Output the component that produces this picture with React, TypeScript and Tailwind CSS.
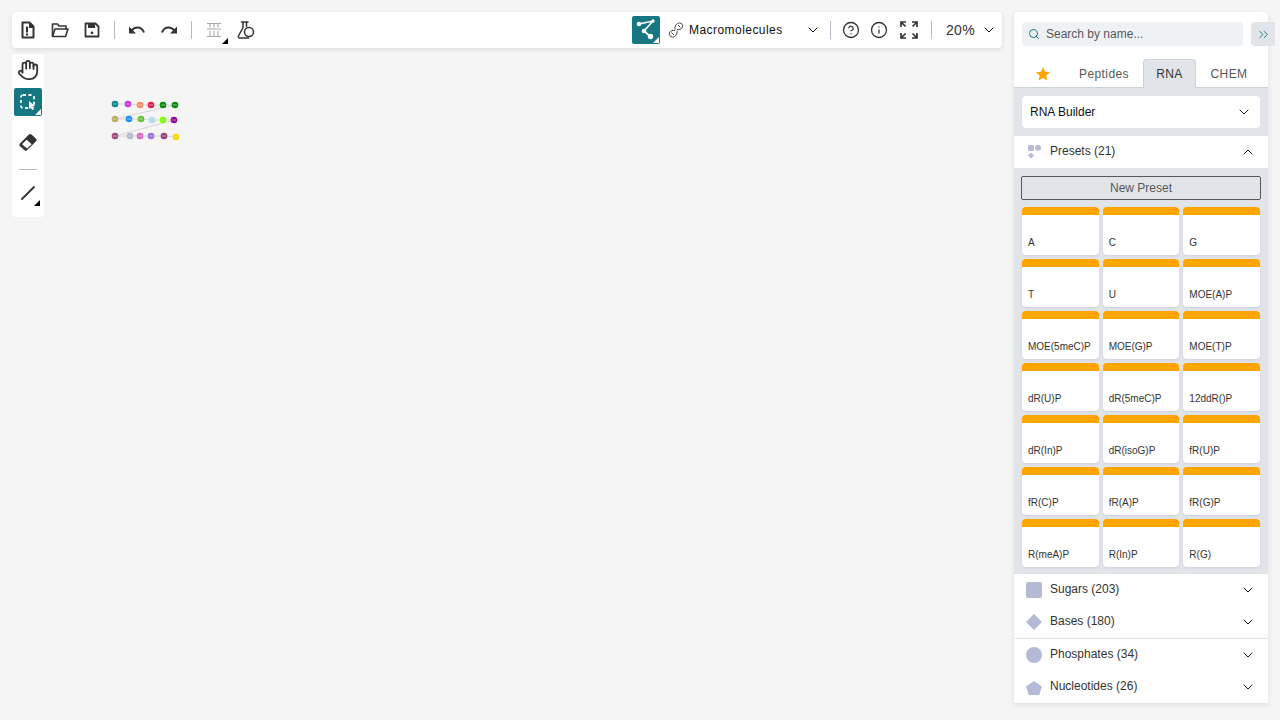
import React from "react";
import { ChevronDown, ChevronUp, Search, ChevronsRight, CircleHelp, Info } from "lucide-react";

const Tri = ({ color = "#000" }: { color?: string }) => (
  <svg width="6" height="6" viewBox="0 0 6 6" className="absolute right-0 bottom-0"><path d="M6 0V6H0Z" fill={color} /></svg>
);
const Sep = () => <div className="w-px h-[18px] bg-[#b4b9c4] mx-[6px]" />;
const Btn = ({ children }: { children: React.ReactNode }) => (
  <div className="relative w-[28px] h-[28px] flex items-center justify-center mx-[2px]">{children}</div>
);

const presets = ["A","C","G","T","U","MOE(A)P","MOE(5meC)P","MOE(G)P","MOE(T)P","dR(U)P","dR(5meC)P","12ddR()P","dR(In)P","dR(isoG)P","fR(U)P","fR(C)P","fR(A)P","fR(G)P","R(meA)P","R(In)P","R(G)"];

const rows: [number, number, string][][] = [
  [[115,104,"#0a8a8a"],[128,104,"#cc33ee"],[140,105,"#ff8c66"],[151,105,"#e0204a"],[163,105,"#0a8a0a"],[175,105,"#0a8a0a"]],
  [[115,119,"#b5b060"],[129,119,"#1e8fff"],[141,119,"#66c23c"],[152,120,"#b0e0e6"],[163,120,"#7cfc00"],[174,120,"#990099"]],
  [[115,136,"#994d88"],[130,136,"#b0bcc8"],[140,136,"#dd66c4"],[151,136,"#a070d8"],[164,136,"#993d80"],[176,137,"#ffd700"]],
];

const Row = ({ icon, label }: { icon: React.ReactNode; label: string }) => (
  <div className="h-[32px] flex items-center px-[12px] bg-white">
    <div className="w-[16px] h-[16px] flex items-center justify-center mr-[8px]">{icon}</div>
    <span className="text-[12px] text-[#333] relative top-[-1px] flex-1">{label}</span>
    <ChevronDown size={16} color="#111" strokeWidth={1.5} />
  </div>
);

export default function App() {
  return (
    <div className="relative h-[720px] w-[1280px] bg-[#f5f5f5] overflow-hidden flex gap-3 p-3 font-['Liberation_Sans',Arial,sans-serif]">
      <div className="flex-1 flex flex-col gap-[6px] items-start">
        <div className="w-full h-[36px] bg-white rounded-[4px] shadow-[0_2px_5px_rgba(103,104,132,0.15)] flex items-center pr-[4px]">
          <Btn>
            <svg width="16" height="18" viewBox="0 0 16 18" fill="none">
              <path d="M2.500 1.500h7l4 4v11h-11z" stroke="#333" strokeWidth="2" strokeLinejoin="round" />
              <path d="M9 1.500h1l4 4v1.500H9z" fill="#333" />
              <path d="M7 5.500v6M7 12.500v2" stroke="#333" strokeWidth="2" />
            </svg>
          </Btn>
          <Btn>
            <svg width="18" height="16" viewBox="0 0 18 16" fill="none">
              <path d="M1.500 14V2h5l1.500 2h7v3" stroke="#333" strokeWidth="1.600" strokeLinejoin="round" />
              <path d="M1.500 14.500l2.500-7.500h13l-2.500 7.500z" stroke="#333" strokeWidth="1.600" strokeLinejoin="round" />
            </svg>
          </Btn>
          <Btn>
            <svg width="16" height="16" viewBox="0 0 16 16" fill="none">
              <path d="M1.500 1.500h10l3 3v10h-13z" stroke="#333" strokeWidth="1.800" strokeLinejoin="round" />
              <path d="M4 2h7v4H4z" fill="#333" />
              <circle cx="8" cy="10.800" r="1.400" fill="#333" />
            </svg>
          </Btn>
          <Sep />
          <Btn>
            <svg width="18" height="10" viewBox="0 0 18 10" fill="none">
              <path d="M3 6c2-2.400 4-3.500 6.500-3.500 3 0 5.300 1.800 6.500 5" stroke="#333" strokeWidth="2" />
              <path d="M1 1.500V8.500H8z" fill="#333" />
            </svg>
          </Btn>
          <Btn>
            <svg width="18" height="10" viewBox="0 0 18 10" fill="none">
              <path d="M15 6c-2-2.400-4-3.500-6.500-3.500-3 0-5.300 1.800-6.500 5" stroke="#333" strokeWidth="2" />
              <path d="M17 1.500V8.500H10z" fill="#333" />
            </svg>
          </Btn>
          <Sep />
          <Btn>
            <svg width="16" height="16" viewBox="0 0 16 16" fill="none">
              <path d="M1 1.500h14M1 14.500h14M1 7h14M4 2v3.500M8 2v3.500M12 2v3.500M4 9v5M8 9v5M12 9v5" stroke="#a8a8a8" strokeWidth="1.100" />
            </svg>
            <span className="absolute right-[0px] bottom-[0px] w-[6px] h-[6px]"><Tri /></span>
          </Btn>
          <Btn>
            <svg width="18" height="18" viewBox="0 0 18 18" fill="none" stroke="#333" strokeWidth="1.500" strokeLinejoin="round" strokeLinecap="round">
              <path d="M4.500 1h6.500M6 1.500v5L1.500 15c-.4 1 .2 2 1.200 2h9" />
              <path d="M9.500 1.500v4" />
              <circle cx="12" cy="11" r="4.500" />
            </svg>
          </Btn>
          <div className="flex-1" />
          <div className="relative w-[28px] h-[28px] bg-[#167782] rounded-[2px] mr-[8px]">
            <svg width="28" height="28" viewBox="0 0 28 28" fill="none">
              <path d="M7 8L21 5L12 15L19 21" stroke="#fff" strokeWidth="1.700" strokeLinejoin="round" />
              <circle cx="7" cy="8" r="2.300" fill="#fff" /><circle cx="21" cy="5" r="1.700" fill="#fff" /><circle cx="12" cy="15" r="2.300" fill="#fff" /><circle cx="18.500" cy="20.500" r="2.700" fill="#fff" />
            </svg>
            <span className="absolute right-[1px] bottom-[1px] w-[6px] h-[6px]"><Tri color="#fff" /></span>
          </div>
          <div className="w-[162px] flex items-center">
            <svg width="16" height="16" viewBox="0 0 16 16" fill="none" className="mr-[5px]">
              <path d="M7 7.500C6.500 4 8.500 1 11.500 1c2.500 0 3.500 2 3 4-.6 2.500-3.500 3-5.500 2.500" stroke="#444" strokeWidth="1" />
              <path d="M9 8.500c.5 3.500-1.500 6.500-4.500 6.500C2 15 1 13 1.500 11c.6-2.500 3.500-3 5.500-2.500" stroke="#444" strokeWidth="1" />
              <path d="M10 3l2.500 2.500M3.500 10.500L6 13" stroke="#444" strokeWidth="0.900" />
            </svg>
            <span className="text-[12px] tracking-[0.45px] text-[#111] flex-1">Macromolecules</span>
            <ChevronDown size={16} color="#111" strokeWidth={1.5} className="mr-[9px]" />
          </div>
          <div className="w-px h-[18px] bg-[#b4b9c4] mr-[4px]" />
          <Btn><CircleHelp size={18} color="#333" strokeWidth={1.700} /></Btn>
          <div className="-ml-[4px]"><Btn><Info size={18} color="#333" strokeWidth={1.700} /></Btn></div>
          <div className="-ml-[2px]"><Btn>
            <svg width="18" height="18" viewBox="0 0 18 18" fill="none" stroke="#333" strokeWidth="1.700">
              <path d="M1 6V1h5M1 1l4.500 4.500M12 1h5v5M17 1l-4.500 4.500M1 12v5h5M1 17l4.500-4.500M17 12v5h-5M17 17l-4.500-4.500" />
            </svg>
          </Btn></div>
          <div className="w-px h-[18px] bg-[#b4b9c4] ml-[6px] mr-[14px]" />
          <span className="text-[14px] text-[#333] w-[35px] tracking-[0.3px]">20%</span>
          <ChevronDown size={16} color="#111" strokeWidth={1.5} className="mr-[1px]" />
        </div>
        <div className="w-[32px] bg-white rounded-[4px] flex flex-col items-center pt-[2px] h-[163px]">
          <div className="w-[28px] h-[28px] flex items-center justify-center">
            <svg width="22" height="22" viewBox="0 0 24 24" fill="none" stroke="#333" strokeWidth="2" strokeLinecap="round" strokeLinejoin="round">
              <path d="M18 11V6a2 2 0 0 0-4 0M14 10V4a2 2 0 0 0-4 0v2M10 10.500V6a2 2 0 0 0-4 0v8" />
              <path d="M18 8a2 2 0 1 1 4 0v6a8 8 0 0 1-8 8h-2c-2.800 0-4.500-.9-6-2.400l-3.600-3.600a2 2 0 0 1 2.800-2.800L6 15" />
            </svg>
          </div>
          <div className="relative w-[28px] h-[28px] bg-[#167782] rounded-[2px] mt-[4px] flex items-center justify-center">
            <svg width="20" height="20" viewBox="0 0 20 20" fill="none">
              <rect x="3" y="3" width="13" height="13" rx="2" stroke="#fff" strokeWidth="1.800" strokeDasharray="3 2.500" />
              <path d="M11 9l6 5-2.700.4 1.500 3-1.300.6-1.500-3L11 17z" fill="#fff" />
            </svg>
            <span className="absolute right-[1px] bottom-[1px] w-[6px] h-[6px]"><Tri color="#fff" /></span>
          </div>
          <div className="w-[28px] h-[28px] mt-[11px] flex items-center justify-center">
            <svg width="22" height="22" viewBox="0 0 24 24">
              <path d="M3 15L13 5a2 2 0 0 1 2.800 0l5 4.500a2 2 0 0 1 0 2.800L11 22a2 2 0 0 1-2.800 0L3 17.500a2 2 0 0 1 0-2.500z" fill="#333" />
              <path d="M5.500 15.500l5-5 5.500 5-5 4.800z" fill="#fff" />
            </svg>
          </div>
          <div className="w-[18px] h-px bg-[#b4b9c4] mt-[14px]" />
          <div className="relative w-[28px] h-[28px] mt-[9px] flex items-center justify-center">
            <svg width="14" height="14" viewBox="0 0 14 14"><path d="M1 13L13 1" stroke="#333" strokeWidth="1.800" strokeLinecap="round" /></svg>
            <span className="absolute right-[2px] bottom-[1px] w-[6px] h-[6px]"><Tri /></span>
          </div>
        </div>
      </div>

      <div className="w-[254px] h-[691px] bg-white rounded-t-[4px] shadow-[0_2px_5px_rgba(103,104,132,0.15)] flex flex-col shrink-0">
        <div className="flex pt-[10px] pl-[8px] h-[48px] shrink-0">
          <div className="w-[221px] h-[24px] bg-[#eff2f5] rounded-[4px] flex items-center pl-[6px]">
            <Search size={12} color="#167782" strokeWidth={2} />
            <span className="text-[12px] text-[#585858] ml-[6px]">Search by name...</span>
          </div>
          <div className="w-[24px] h-[24px] ml-[8px] mr-[-7px] bg-[#e1e5ea] rounded-l-[4px] flex items-center justify-center">
            <ChevronsRight size={15} color="#167782" strokeWidth={1.500} />
          </div>
        </div>
        <div className="h-[28px] flex items-end border-b border-[#cad3dd] shrink-0 relative">
          <div className="w-[58px] h-[27px] flex items-center justify-center">
            <svg width="16" height="16" viewBox="0 0 16 16"><path d="M8 1l2.100 4.700 5 .5-3.800 3.300 1.100 5L8 11.900 3.600 14.500l1.100-5L.9 6.200l5-.5z" fill="#ffa500" /></svg>
          </div>
          <div className="w-[71px] h-[27px] pr-[7px] flex items-center justify-center text-[12px] tracking-[0.4px] text-[#585858]">Peptides</div>
          <div className="w-[53px] h-[29px] -mb-px bg-[#e1e5ea] border border-b-0 border-[#cad3dd] rounded-t-[4px] flex items-center justify-center text-[12px] tracking-[0.4px] text-[#333]">RNA</div>
          <div className="w-[66px] h-[27px] flex items-center justify-center text-[12px] tracking-[0.4px] text-[#585858]">CHEM</div>
        </div>
        <div className="bg-[#e1e5ea] h-[48px] py-[8px] px-[8px] shrink-0">
          <div className="h-[32px] bg-white rounded-[4px] flex items-center pl-[8px] pr-[8px]">
            <span className="text-[12px] text-[#111] flex-1">RNA Builder</span>
            <ChevronDown size={16} color="#111" strokeWidth={1.5} />
          </div>
        </div>
        <div className="h-[32px] flex items-center px-[12px] bg-white shrink-0">
          <div className="w-[16px] h-[16px] mr-[8px] relative">
            <svg width="16" height="16" viewBox="0 0 16 16" fill="#b8bbd9">
              <rect x="2" y="1" width="6" height="6" rx="1" />
              <circle cx="12" cy="3.800" r="3" />
              <path d="M5 8.500l3 3-3 3-3-3z" />
            </svg>
          </div>
          <span className="text-[12px] text-[#333] relative top-[-1px] flex-1">Presets (21)</span>
          <ChevronUp size={16} color="#111" strokeWidth={1.5} />
        </div>
        <div className="bg-[#e1e5ea] h-[406px] px-[8px] pt-[8px] shrink-0">
          <div className="h-[24px] -mx-[1px] border border-[#585858] rounded-[2px] flex items-center justify-center text-[12px] text-[#585858]">New Preset</div>
          <div className="grid grid-cols-3 gap-[4px] mt-[7px]">
            {presets.map((p) => (
              <div key={p} className="h-[48px] bg-white rounded-[4px] shadow-[0_1px_2px_rgba(103,104,132,0.15)] overflow-hidden flex flex-col">
                <div className="h-[8px] bg-[#ffa500]" />
                <div className="flex-1 flex items-end pl-[6px] pb-[5px] text-[10px] leading-[14px] text-[#333]">{p}</div>
              </div>
            ))}
          </div>
        </div>
        <Row label="Sugars (203)" icon={<div className="w-[16px] h-[16px] bg-[#b4b9d6] rounded-[2px]" />} />
        <Row label="Bases (180)" icon={<svg width="18" height="18" viewBox="0 0 18 18" className="shrink-0"><path d="M9 1l8 8-8 8-8-8z" fill="#b4b9d6" /></svg>} />
        <div className="h-px bg-[#e1e5ea]" />
        <Row label="Phosphates (34)" icon={<div className="w-[16px] h-[16px] bg-[#b4b9d6] rounded-full" />} />
        <Row label="Nucleotides (26)" icon={<svg width="16" height="16" viewBox="0 0 16 16" className="mt-[1px]"><path d="M8 1l8 5.500-2.800 8.500H2.800L0 6.500z" fill="#b4b9d6" /></svg>} />
      </div>

      <svg className="absolute left-0 top-0 pointer-events-none" width="200" height="150" viewBox="0 0 200 150" fill="none">
        {rows.map((r, i) => (
          <polyline key={i} points={r.map((n) => `${n[0]},${n[1]}`).join(" ")} stroke="#d8d8d8" strokeWidth="1" />
        ))}
        <path d="M175 105L115 119M174 120L115 136" stroke="#cfcfcf" strokeWidth="0.800" />
        {rows.flat().map((n, i) => (
          <g key={i}>
            <circle cx={n[0]} cy={n[1]} r="3.300" fill={n[2]} />
            <rect x={n[0] - 2} y={n[1] - 0.500} width="4" height="1" fill="#ddd" opacity="0.600" />
          </g>
        ))}
      </svg>
    </div>
  );
}
